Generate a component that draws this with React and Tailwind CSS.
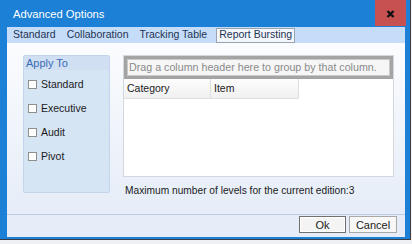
export default function App() {
  const tabs = ["Standard", "Collaboration", "Tracking Table", "Report Bursting"];
  const active = "Report Bursting";
  const targets = ["Standard", "Executive", "Audit", "Pivot"];

  return (
    <div className="h-[244px] w-[412px] bg-[#eef0f3] font-['Liberation_Sans',Arial,sans-serif]">
      <div className="flex h-[240px] w-[411px] flex-col border-b border-r border-[#3a3f47] bg-[#1b80d6]">
        {/* title bar */}
        <div className="flex h-[26px] shrink-0 items-center">
          <span className="pl-[13px] pt-[2px] text-[11.2px] text-white">Advanced Options</span>
          <button className="ml-auto mr-[4px] flex h-[26px] w-[31px] items-center justify-center bg-[#c75050] pt-[2px]">
            <svg width="9" height="8" viewBox="0 0 9 8">
              <path d="M1.5 1 L7.5 7 M7.5 1 L1.5 7" stroke="#111" strokeWidth="2.4" />
            </svg>
          </button>
        </div>

        <div className="ml-[7px] mr-[5px] mt-[1px] flex flex-1 flex-col">
          {/* tabs */}
          <div className="flex h-[16px] items-center bg-[#c6ddfa] pl-[6px] text-[10.5px] text-[#1e3453]">
            {tabs.map((t) => (
              <span
                key={t}
                className={
                  t === active
                    ? "-ml-[2px] flex h-[15px] items-center border border-[#9aa4b0] bg-[#f3f7fd] px-[2px]"
                    : "pr-[11px]"
                }
              >
                {t}
              </span>
            ))}
          </div>

          {/* content */}
          <div className="flex h-[171px] bg-gradient-to-b from-[#fbfcfe] to-[#e6edf8] pl-[16px] pt-[12px]">
            <div className="flex h-[138px] w-[87px] flex-col rounded-[2px] border border-[#c3d5ec] bg-[#d6e5f4]">
              <div className="flex h-[14px] items-center bg-[#d0e0f2] pl-[2px] text-[11px] text-[#3a6ab5]">
                Apply To
              </div>
              <div className="flex flex-col gap-[11px] pl-[4px] pt-[8px]">
                {targets.map((t) => (
                  <label key={t} className="flex h-[13px] items-center text-[10.5px] text-[#1b1b1b]">
                    <span className="h-[9px] w-[9px] border border-[#8f8f8f] bg-white" />
                    <span className="pl-[4px]">{t}</span>
                  </label>
                ))}
              </div>
            </div>

            <div className="ml-[13px] flex flex-col">
              <div className="h-[122px] w-[271px] border border-[#d4d8de] bg-white">
                <div className="bg-[#a4a4a4] px-[3px] py-[3px]">
                  <div className="flex h-[17px] items-center whitespace-nowrap border border-[#c9c9c9] bg-[#f6f6f6] pl-[1px] text-[10.7px] text-[#8a8a8a]">
                    Drag a column header here to group by that column.
                  </div>
                </div>
                <div className="flex h-[20px] text-[10.5px] text-[#1b1b1b]">
                  <div className="flex w-[87px] items-center border-r border-b border-[#dedede] bg-gradient-to-b from-[#fdfdfd] to-[#f0f0f0] pl-[3px]">
                    Category
                  </div>
                  <div className="flex w-[88px] items-center border-r border-b border-[#dedede] bg-gradient-to-b from-[#fdfdfd] to-[#f0f0f0] pl-[3px]">
                    Item
                  </div>
                </div>
              </div>
              <div className="whitespace-nowrap pl-[2px] pt-[6px] text-[10.2px] text-[#1b1b1b]">
                Maximum number of levels for the current edition:3
              </div>
            </div>
          </div>

          {/* footer */}
          <div className="flex h-[23px] justify-end gap-[3px] border-t border-[#b9cbe6] bg-[#e6edf8] pr-[8px] pt-[1px]">
            <button className="h-[17px] w-[47px] border border-[#707070] bg-[#f4f4f4] text-[11px] text-[#1b1b1b] shadow-[inset_0_0_0_1px_#fff]">
              Ok
            </button>
            <button className="h-[17px] w-[48px] border border-[#a8a8a8] bg-[#f7f7f7] text-[11px] text-[#1b1b1b]">
              Cancel
            </button>
          </div>
          <div className="h-[2px]" />
        </div>
      </div>
    </div>
  );
}
